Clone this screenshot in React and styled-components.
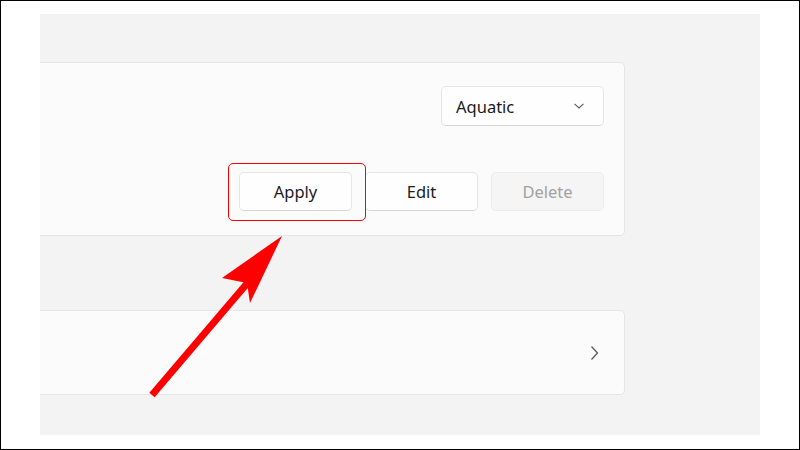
import styled, { createGlobalStyle } from 'styled-components'

const Global = createGlobalStyle`
    html, body {
        margin: 0;
        background: #ffffff;
    }
    * {
        box-sizing: border-box;
    }
`

const Frame = styled.div`
    position: relative;
    width: 800px;
    height: 450px;
    border: 1px solid #000;
    background: #fff;
    padding: 13px 39px 14px 39px;
    font-family: "Noto Sans", "Open Sans", sans-serif;
`

const Panel = styled.div`
    height: 421px;
    background: #f3f3f3;
    overflow: hidden;
    display: flex;
    flex-direction: column;
    padding: 48px 135px 0 0;
`

const Card = styled.div`
    margin-left: -10px;
    background: #fbfbfb;
    border: 1px solid #e5e5e5;
    border-radius: 5px;
    display: flex;
    flex-direction: column;
    align-items: flex-end;
    padding: 23px 20px 24px;
`

const LinkCard = styled(Card)`
    margin-top: 74px;
    height: 85px;
    padding: 0 25px;
    justify-content: center;
`

const Dropdown = styled.div`
    width: 163px;
    height: 40px;
    background: #fefefe;
    border: 1px solid #e5e5e5;
    border-bottom-color: #d6d6d6;
    border-radius: 5px;
    display: flex;
    align-items: center;
    justify-content: space-between;
    padding: 0 18px 0 14px;
    font-size: 16.5px;
    color: #1b1b1b;
`

const Actions = styled.div`
    margin-top: 46px;
    display: flex;
    gap: 13px;
`

const Highlight = styled.div`
    position: relative;
`

const RedBox = styled.div`
    position: absolute;
    left: -11px;
    top: -9px;
    width: 138px;
    height: 58px;
    border: 1.5px solid #ff0000;
    border-radius: 5px;
    pointer-events: none;
`

const Button = styled.div`
    width: 113px;
    height: 39px;
    border-radius: 5px;
    display: flex;
    align-items: center;
    justify-content: center;
    font-size: 16.5px;
    background: ${p => (p.disabled ? '#f5f5f5' : '#fefefe')};
    color: ${p => (p.disabled ? '#a2a2a2' : '#1b1b1b')};
    border: 1px solid ${p => (p.disabled ? '#ececec' : '#e5e5e5')};
    border-bottom-color: ${p => (p.disabled ? '#ececec' : '#d6d6d6')};
`

const Arrow = styled.svg`
    position: absolute;
    left: 0;
    top: 0;
    pointer-events: none;
`

function Chevron({ dir }) {
    if (dir === 'down') {
        return (
            <svg width="12" height="8" viewBox="0 0 12 8">
                <path d="M1.5 1.8 L6 6 L10.5 1.8" fill="none" stroke="#5a5a5a" strokeWidth="1.1" />
            </svg>
        )
    }
    return (
        <svg width="9" height="16" viewBox="0 0 9 16">
            <path d="M1.5 1.5 L7.5 8 L1.5 14.5" fill="none" stroke="#5a5a5a" strokeWidth="1.3" />
        </svg>
    )
}

function App() {
    return (
        <Frame>
            <Global />
            <Panel>
                <Card>
                    <Dropdown>
                        <span>Aquatic</span>
                        <Chevron dir="down" />
                    </Dropdown>
                    <Actions>
                        <Highlight>
                            <Button>Apply</Button>
                            <RedBox />
                        </Highlight>
                        <Button>Edit</Button>
                        <Button disabled>Delete</Button>
                    </Actions>
                </Card>
                <LinkCard>
                    <Chevron dir="right" />
                </LinkCard>
            </Panel>
            <Arrow width="798" height="448" viewBox="1 1 798 448">
                <line x1="152" y1="395" x2="250" y2="280" stroke="#ff0000" strokeWidth="7" />
                <polygon points="282,236 222,278 247,283 250,303" fill="#ff0000" />
            </Arrow>
        </Frame>
    )
}

export default App
